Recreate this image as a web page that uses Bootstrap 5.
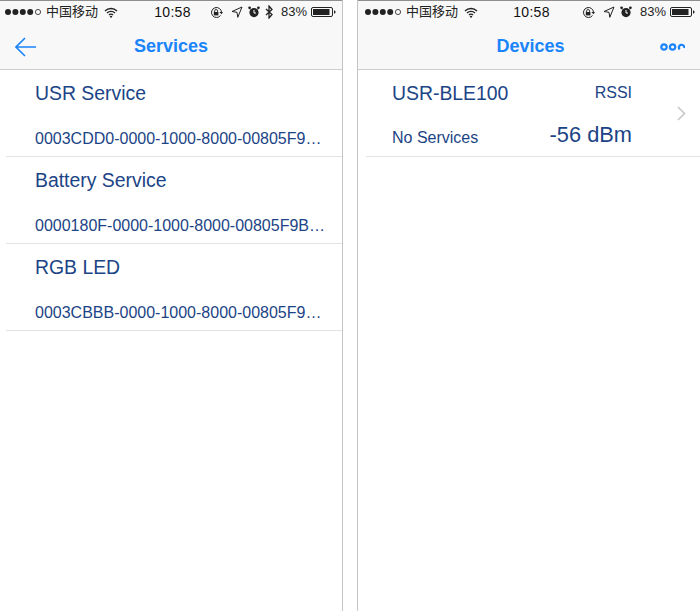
<!DOCTYPE html>
<html lang="en">
<head>
  <meta charset="UTF-8">
  <title>BLE Services</title>
  <meta name="viewport" content="width=device-width, initial-scale=1.0">
  <link href="https://cdn.jsdelivr.net/npm/bootstrap@5.3.0/dist/css/bootstrap.min.css" rel="stylesheet">
  <style>
    body {
      font-family: "Liberation Sans", "Noto Sans CJK SC", sans-serif;
      background: #fff;
      color: #1b4486;
      height: 611px;
      overflow: hidden;
    }
    .screens { height: 611px; gap: 14px; }
    .phone-left { width: 343px; border-right: 1px solid #c4c4c4; }
    .phone-right { flex: 1; border-left: 1px solid #c4c4c4; }
    .topbar {
      height: 70px;
      background: #f8f8f8;
      border-top: 1px solid #8e8e8e;
      border-bottom: 1px solid #cdcdcd;
    }
    .status-row { height: 22px; color: #222; font-size: 13px; }
    .phone-left .status-row { padding: 0 6px 0 5px; }
    .phone-right .status-row { padding: 0 5px 0 7px; }
    .status-side { flex: 1 1 0; gap: 5px; }
    .carrier { margin-left: -1px; }
    .wifi-mark { margin-left: 1px; }
    .status-time { font-size: 14px; font-weight: 500; color: #111; letter-spacing: .3px; margin-left: 4px; }
    .phone-right .status-time { margin-left: 3px; }
    .lock-mark { margin-right: 3px; }
    .battery-pct { margin-left: 3px; margin-right: -1px; }
    .nav-row { height: 47px; }
    .nav-title { font-size: 18px; font-weight: 700; color: #1a84fb; }
    .nav-side { width: 60px; }
    .nav-side-wide { width: 63px; }
    .more-side { padding-right: 15px; }
    .back-mark { margin-left: 15px; }
    .svc-row { height: 87px; margin-left: 6px; border-bottom: 1px solid #e2e2e2; padding: 10px 0 0 29px; }
    .svc-name { font-size: 19.4px; line-height: 26px; }
    .svc-uuid { font-size: 16px; line-height: 20px; margin-top: 23px; }
    .dev-row { height: 87px; margin-left: 8px; border-bottom: 1px solid #e2e2e2; padding: 10px 14px 0 26px; }
    .dev-main { width: 240px; }
    .dev-name { font-size: 19.4px; line-height: 26px; }
    .dev-rssi { font-size: 16px; line-height: 26px; }
    .dev-line2 { margin-top: 16px; height: 26px; }
    .dev-services { font-size: 16px; line-height: 26px; padding-top: 3px; }
    .dev-value { font-size: 21.8px; line-height: 26px; }
    .chevron-mark { margin-top: 26px; }
  </style>
</head>
<body>

<div class="screens d-flex">

  <div class="phone-left">
    <div class="topbar">
      <div class="status-row d-flex align-items-center">
        <div class="status-side d-flex align-items-center">
          <svg width="37" height="8" viewBox="0 0 37 8"><circle cx="3" cy="4" r="3" fill="#222"/><circle cx="10.400" cy="4" r="3" fill="#222"/><circle cx="17.800" cy="4" r="3" fill="#222"/><circle cx="25.200" cy="4" r="3" fill="#222"/><circle cx="33" cy="4" r="2.600" fill="none" stroke="#222" stroke-width=".8"/></svg>
          <span class="carrier">中国移动</span>
          <svg class="wifi-mark" width="14" height="11" viewBox="0 0 14 11"><path d="M1 4a8.500 8.500 0 0 1 12 0M3 6a5.700 5.700 0 0 1 8 0M5 8a2.800 2.800 0 0 1 4 0" fill="none" stroke="#222" stroke-width="1.400"/><path d="M7 11 5.600 9.400a2 2 0 0 1 2.800 0z" fill="#222"/></svg>
        </div>
        <div class="status-time">10:58</div>
        <div class="status-side d-flex align-items-center justify-content-end">
          <svg class="lock-mark" width="13" height="13" viewBox="0 0 13 13"><path d="M10.500 9.500a5 5 0 1 1 1-3" fill="none" stroke="#222" stroke-width="1"/><path d="m9.400 6 2.100 2.200L13 6z" fill="#222"/><rect x="3.800" y="6" width="4.600" height="3.400" fill="#222"/><path d="M4.600 6V5a1.500 1.500 0 0 1 3 0v1" fill="none" stroke="#222" stroke-width=".9"/></svg>
          <svg width="12" height="12" viewBox="0 0 12 12"><path d="M11 1 1 5.500l5 .8.8 5z" fill="none" stroke="#222" stroke-width="1"/></svg>
          <svg width="12" height="12" viewBox="0 0 12 12"><circle cx="6" cy="6.600" r="4.600" fill="#222"/><path d="M6 4v3h2" fill="none" stroke="#fff" stroke-width="1"/><circle cx="1.600" cy="1.800" r="1.400" fill="#222"/><circle cx="10.400" cy="1.800" r="1.400" fill="#222"/></svg>
          <svg width="8" height="14" viewBox="0 0 8 14"><path d="M1 4 7 9.500 4 13V1l3 3.500L1 10" fill="none" stroke="#222" stroke-width="1.300"/></svg>
          <span class="battery-pct">83%</span>
          <svg width="25" height="10" viewBox="0 0 25 10"><rect x=".5" y=".5" width="21" height="9" rx="1.500" fill="none" stroke="#222"/><rect x="2" y="2" width="16.500" height="6" fill="#222"/><path d="M23 3.500c1 0 1.500.5 1.500 1.500s-.5 1.500-1.500 1.500z" fill="#222"/></svg>
        </div>
      </div>
      <div class="nav-row d-flex align-items-center justify-content-between">
        <div class="nav-side">
          <svg class="back-mark d-block" width="21" height="20" viewBox="0 0 21 20"><path d="M10 1 1 10l9 9M1 10H21" fill="none" stroke="#1a84fb" stroke-width="1.600"/></svg>
        </div>
        <div class="nav-title">Services</div>
        <div class="nav-side"></div>
      </div>
    </div>
    <div class="svc-row">
      <div class="svc-name">USR Service</div>
      <div class="svc-uuid text-nowrap">0003CDD0-0000-1000-8000-00805F9…</div>
    </div>
    <div class="svc-row">
      <div class="svc-name">Battery Service</div>
      <div class="svc-uuid text-nowrap">0000180F-0000-1000-8000-00805F9B…</div>
    </div>
    <div class="svc-row">
      <div class="svc-name">RGB LED</div>
      <div class="svc-uuid text-nowrap">0003CBBB-0000-1000-8000-00805F9…</div>
    </div>
  </div>

  <div class="phone-right">
    <div class="topbar">
      <div class="status-row d-flex align-items-center">
        <div class="status-side d-flex align-items-center">
          <svg width="37" height="8" viewBox="0 0 37 8"><circle cx="3" cy="4" r="3" fill="#222"/><circle cx="10.400" cy="4" r="3" fill="#222"/><circle cx="17.800" cy="4" r="3" fill="#222"/><circle cx="25.200" cy="4" r="3" fill="#222"/><circle cx="33" cy="4" r="2.600" fill="none" stroke="#222" stroke-width=".8"/></svg>
          <span class="carrier">中国移动</span>
          <svg class="wifi-mark" width="14" height="11" viewBox="0 0 14 11"><path d="M1 4a8.500 8.500 0 0 1 12 0M3 6a5.700 5.700 0 0 1 8 0M5 8a2.800 2.800 0 0 1 4 0" fill="none" stroke="#222" stroke-width="1.400"/><path d="M7 11 5.600 9.400a2 2 0 0 1 2.800 0z" fill="#222"/></svg>
        </div>
        <div class="status-time">10:58</div>
        <div class="status-side d-flex align-items-center justify-content-end">
          <svg class="lock-mark" width="13" height="13" viewBox="0 0 13 13"><path d="M10.500 9.500a5 5 0 1 1 1-3" fill="none" stroke="#222" stroke-width="1"/><path d="m9.400 6 2.100 2.200L13 6z" fill="#222"/><rect x="3.800" y="6" width="4.600" height="3.400" fill="#222"/><path d="M4.600 6V5a1.500 1.500 0 0 1 3 0v1" fill="none" stroke="#222" stroke-width=".9"/></svg>
          <svg width="12" height="12" viewBox="0 0 12 12"><path d="M11 1 1 5.500l5 .8.8 5z" fill="none" stroke="#222" stroke-width="1"/></svg>
          <svg width="12" height="12" viewBox="0 0 12 12"><circle cx="6" cy="6.600" r="4.600" fill="#222"/><path d="M6 4v3h2" fill="none" stroke="#fff" stroke-width="1"/><circle cx="1.600" cy="1.800" r="1.400" fill="#222"/><circle cx="10.400" cy="1.800" r="1.400" fill="#222"/></svg>
          <span class="battery-pct">83%</span>
          <svg width="25" height="10" viewBox="0 0 25 10"><rect x=".5" y=".5" width="21" height="9" rx="1.500" fill="none" stroke="#222"/><rect x="2" y="2" width="16.500" height="6" fill="#222"/><path d="M23 3.500c1 0 1.500.5 1.500 1.500s-.5 1.500-1.500 1.500z" fill="#222"/></svg>
        </div>
      </div>
      <div class="nav-row d-flex align-items-center justify-content-between">
        <div class="nav-side-wide"></div>
        <div class="nav-title">Devices</div>
        <div class="nav-side more-side d-flex justify-content-end">
          <svg width="25" height="8" viewBox="0 0 25 8"><circle cx="4" cy="4" r="2.700" fill="none" stroke="#1a84fb" stroke-width="2.200"/><circle cx="12.600" cy="4" r="2.700" fill="none" stroke="#1a84fb" stroke-width="2.200"/><path d="M19.700 6.400a2.700 2.700 0 1 1 4.500-1.300" fill="none" stroke="#1a84fb" stroke-width="2.200"/></svg>
        </div>
      </div>
    </div>
    <div class="dev-row d-flex justify-content-between">
      <div class="dev-main">
        <div class="d-flex justify-content-between">
          <span class="dev-name">USR-BLE100</span>
          <span class="dev-rssi">RSSI</span>
        </div>
        <div class="dev-line2 d-flex justify-content-between">
          <span class="dev-services">No Services</span>
          <span class="dev-value">-56 dBm</span>
        </div>
      </div>
      <svg class="chevron-mark" width="9" height="15" viewBox="0 0 9 15"><path d="m1 1 6.500 6.500L1 14" fill="none" stroke="#c7c7cc" stroke-width="1.600"/></svg>
    </div>
  </div>

</div>

<script src="https://cdn.jsdelivr.net/npm/bootstrap@5.3.0/dist/js/bootstrap.bundle.min.js"></script>
</body>
</html>
